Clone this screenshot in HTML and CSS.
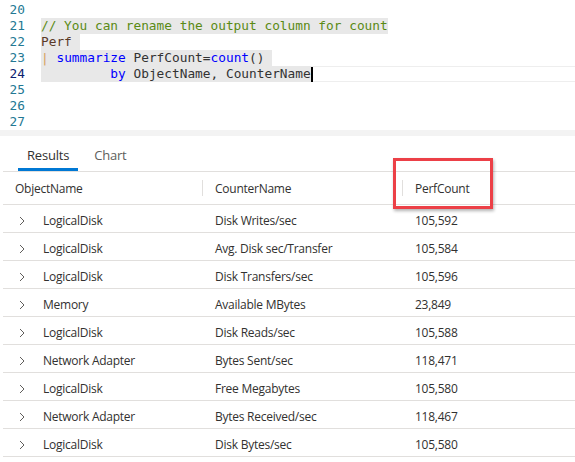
FILE: index.html
```html
<!DOCTYPE html>
<html>
<head>
<meta charset="utf-8">
<link rel="stylesheet" href="styles.css">
</head>
<body>
<div class="editor">
  <div class="line"><span class="ln">20</span><span class="code"></span></div>
  <div class="line"><span class="ln">21</span><span class="code"><span class="sel"><span class="cm">// You can rename the output column for count</span></span></span></div>
  <div class="line"><span class="ln">22</span><span class="code"><span class="sel"><span class="tbl">Perf</span> </span></span></div>
  <div class="line"><span class="ln">23</span><span class="code"><span class="sel"><span class="pipe">|</span> <span class="kw">summarize</span> PerfCount=<span class="kw">count</span>() </span></span></div>
  <div class="line current"><span class="ln">24</span><span class="code cur"><span class="sel">         <span class="kw">by</span> ObjectName, CounterName</span><span class="caret"></span></span></div>
  <div class="line"><span class="ln">25</span><span class="code"></span></div>
  <div class="line"><span class="ln">26</span><span class="code"></span></div>
  <div class="line"><span class="ln">27</span><span class="code"></span></div>
</div>
<div class="splitter"></div>
<div class="tabs">
  <div class="tab active">Results</div>
  <div class="tab">Chart</div>
</div>
<div class="grid">
  <div class="row head">
    <div class="cell c1">ObjectName</div>
    <div class="cell c2"><span class="sep"></span>CounterName</div>
    <div class="cell c3"><span class="sep"></span>PerfCount</div>
  </div>
  <div class="row"><div class="cell c1"><svg class="chev" width="6" height="10" viewBox="0 0 6 10"><path d="M1 1 L5 5 L1 9"/></svg>LogicalDisk</div><div class="cell c2">Disk Writes/sec</div><div class="cell c3">105,592</div></div>
  <div class="row"><div class="cell c1"><svg class="chev" width="6" height="10" viewBox="0 0 6 10"><path d="M1 1 L5 5 L1 9"/></svg>LogicalDisk</div><div class="cell c2">Avg. Disk sec/Transfer</div><div class="cell c3">105,584</div></div>
  <div class="row"><div class="cell c1"><svg class="chev" width="6" height="10" viewBox="0 0 6 10"><path d="M1 1 L5 5 L1 9"/></svg>LogicalDisk</div><div class="cell c2">Disk Transfers/sec</div><div class="cell c3">105,596</div></div>
  <div class="row"><div class="cell c1"><svg class="chev" width="6" height="10" viewBox="0 0 6 10"><path d="M1 1 L5 5 L1 9"/></svg>Memory</div><div class="cell c2">Available MBytes</div><div class="cell c3">23,849</div></div>
  <div class="row"><div class="cell c1"><svg class="chev" width="6" height="10" viewBox="0 0 6 10"><path d="M1 1 L5 5 L1 9"/></svg>LogicalDisk</div><div class="cell c2">Disk Reads/sec</div><div class="cell c3">105,588</div></div>
  <div class="row"><div class="cell c1"><svg class="chev" width="6" height="10" viewBox="0 0 6 10"><path d="M1 1 L5 5 L1 9"/></svg>Network Adapter</div><div class="cell c2">Bytes Sent/sec</div><div class="cell c3">118,471</div></div>
  <div class="row"><div class="cell c1"><svg class="chev" width="6" height="10" viewBox="0 0 6 10"><path d="M1 1 L5 5 L1 9"/></svg>LogicalDisk</div><div class="cell c2">Free Megabytes</div><div class="cell c3">105,580</div></div>
  <div class="row"><div class="cell c1"><svg class="chev" width="6" height="10" viewBox="0 0 6 10"><path d="M1 1 L5 5 L1 9"/></svg>Network Adapter</div><div class="cell c2">Bytes Received/sec</div><div class="cell c3">118,467</div></div>
  <div class="row"><div class="cell c1"><svg class="chev" width="6" height="10" viewBox="0 0 6 10"><path d="M1 1 L5 5 L1 9"/></svg>LogicalDisk</div><div class="cell c2">Disk Bytes/sec</div><div class="cell c3">105,580</div></div>
</div>
<div class="callout"></div>
</body>
</html>
```

FILE: styles.css
```css
html, body {
  margin: 0;
  padding: 0;
  background: #ffffff;
}
body {
  width: 575px;
  height: 462px;
  overflow: hidden;
  position: relative;
  font-family: "Segoe UI", "Open Sans", sans-serif;
  color: #323130;
}
.editor {
  height: 128px;
  padding-top: 2px;
  font-family: "DejaVu Sans Mono", monospace;
  font-size: 12.8px;
}
.line {
  display: flex;
  height: 16px;
  line-height: 16px;
}
.ln {
  width: 25px;
  text-align: right;
  color: #237893;
  flex: none;
}
.current .ln {
  color: #0b216f;
}
.code {
  margin-left: 16px;
  flex: 1;
  display: flex;
  white-space: pre;
  color: #333333;
}
.code.cur {
  box-shadow: inset 0 1px 0 #eeeeee, inset 0 -1px 0 #eeeeee;
}
.sel {
  background: #e8e8e8;
  white-space: pre;
}
.cm { color: #5a8a14; }
.tbl { color: #5a3a28; }
.kw { color: #0000ff; }
.pipe { color: #d6a05c; }
.caret {
  width: 2px;
  height: 15px;
  margin-top: 1px;
  background: #000;
}
.splitter {
  height: 6px;
  background: #f3f3f3;
}
.tabs {
  display: flex;
  height: 35px;
  padding-left: 18px;
  gap: 7px;
  box-sizing: border-box;
}
.tab {
  padding: 6px 9px 0;
  display: flex;
  align-items: center;
  font-size: 13px;
  letter-spacing: -0.2px;
  color: #605e5c;
  box-sizing: border-box;
  border-bottom: 3px solid transparent;
}
.tab.active {
  color: #323130;
  border-bottom-color: #0078d4;
}
.grid {
  margin-left: 3px;
  border-top: 1px solid #e1dfdd;
}
.row {
  display: flex;
  height: 27px;
  border-bottom: 1px solid #e1dfdd;
  font-size: 12px;
  letter-spacing: -0.25px;
  align-items: center;
}
.row.head {
  height: 32px;
  color: #323130;
}
.cell {
  display: flex;
  align-items: center;
  height: 100%;
  box-sizing: border-box;
  white-space: nowrap;
}
.row:not(.head) .cell { padding-top: 4px; }
.c1 { width: 199px; padding-left: 12px; }
.c2 { width: 200px; padding-left: 13px; position: relative; }
.c3 { flex: 1; padding-left: 13px; position: relative; }
.row:not(.head) .c1 { padding-left: 16px; }
.sep {
  position: absolute;
  left: 0;
  top: 8px;
  height: 16px;
  width: 1px;
  background: #e1dfdd;
}
.chev {
  fill: none;
  stroke: #605e5c;
  stroke-width: 1;
  margin-right: 18px;
}
.callout {
  position: absolute;
  left: 393px;
  top: 158px;
  width: 100px;
  height: 51px;
  box-sizing: border-box;
  border: 3px solid #ec4047;
  box-shadow: 1px 2px 3px rgba(0, 0, 0, 0.3);
}
```
